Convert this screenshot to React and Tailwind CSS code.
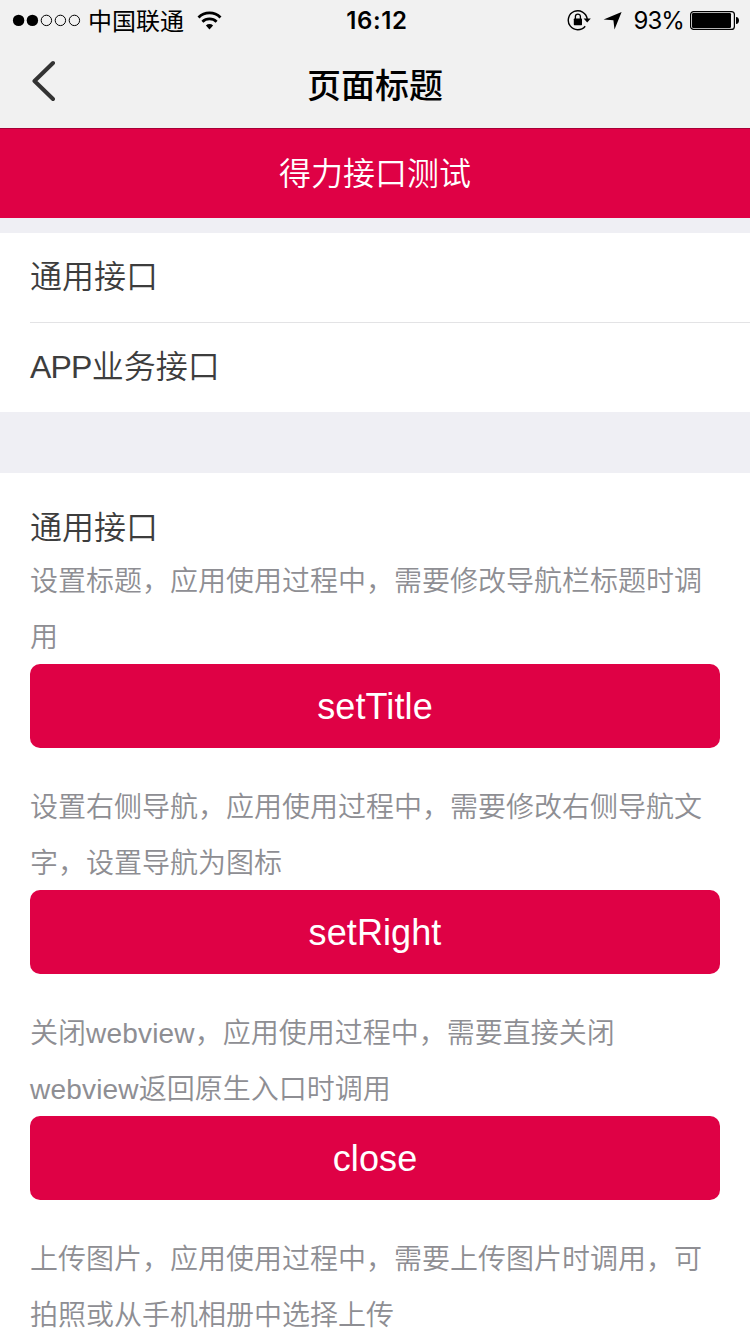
const sections = [
  { lines: [['设置标题，应用使用过程中，需要修改导航栏标题时调'], ['用']], action: 'setTitle' },
  { lines: [['设置右侧导航，应用使用过程中，需要修改右侧导航文'], ['字，设置导航为图标']], action: 'setRight' },
  { lines: [['关闭', 'webview', '，应用使用过程中，需要直接关闭'], ['', 'webview', '返回原生入口时调用']], action: 'close' },
  { lines: [['上传图片，应用使用过程中，需要上传图片时调用，可'], ['拍照或从手机相册中选择上传']], action: null },
];

function StatusBar() {
  return (
    <div className="grid h-10 grid-cols-3 items-center text-black">
      <div className="flex h-10 items-center pl-3">
        <svg width="70" height="14" viewBox="0 0 70 14" className="shrink-0">
          <circle cx="6.6" cy="7.4" r="5.7" />
          <circle cx="20.4" cy="7.4" r="5.7" />
          <g fill="none" stroke="#000" strokeWidth="1">
            <circle cx="34.4" cy="7.4" r="5.2" />
            <circle cx="48.4" cy="7.4" r="5.2" />
            <circle cx="62.4" cy="7.4" r="5.2" />
          </g>
        </svg>
        <span className="ml-[6px] pt-[3px] text-[24px] leading-[37px] whitespace-nowrap">中国联通</span>
        <svg width="25" height="20" viewBox="0 0 25 20" className="mt-px ml-[13px] shrink-0" fill="none" stroke="#000" strokeWidth="2.8">
          <path d="M1.5 6.4a15.6 15.6 0 0 1 22 0" />
          <path d="M5.4 10.8a10.2 10.2 0 0 1 14.2 0" />
          <path d="M8.9 14.5a5.3 5.3 0 0 1 7.2 0L12.5 18.6z" fill="#000" stroke="none" />
        </svg>
      </div>
      <div className="pt-[2px] pl-1 text-center font-['Inter',sans-serif] text-[24px] leading-[38px] font-semibold tracking-[0.6px]">16:12</div>
      <div className="flex h-10 items-center justify-end pr-[10px]">
        <svg width="24" height="22" viewBox="0 0 24 22" className="shrink-0">
          <path d="M18.2 17.2a9.5 9.5 0 1 1 2-7.2" fill="none" stroke="#000" strokeWidth="1.4" />
          <path d="M16.6 9.6h7.2l-3.6 4z" />
          <rect x="6.8" y="9.6" width="8.2" height="6.6" rx="0.6" />
          <path d="M8.4 10V7.6a2.5 2.5 0 0 1 5 0V10" fill="none" stroke="#000" strokeWidth="1.3" />
        </svg>
        <svg width="19" height="19" viewBox="0 0 19 19" className="ml-3 shrink-0">
          <path d="M18.6 1 11.5 18.4 10.4 9.2.6 8.6z" />
        </svg>
        <span className="ml-[11px] pt-[2px] font-['Inter',sans-serif] text-[24px] leading-[38px] tracking-[-0.9px]">93%</span>
        <svg width="50" height="19" viewBox="0 0 50 19" className="mt-px ml-[6px] shrink-0">
          <rect x=".6" y=".6" width="43.8" height="17.8" rx="3" fill="none" stroke="#000" strokeWidth="1.2" />
          <rect x="2" y="2" width="39" height="15" rx="1.2" />
          <path d="M46 6c4 0 4 7 0 7z" />
        </svg>
      </div>
    </div>
  );
}

export default function App() {
  return (
    <div className="h-[1334px] w-[750px] overflow-hidden bg-[#efeff4] font-['Liberation_Sans','Noto_Sans_CJK_SC',sans-serif] text-[#3d3d3d]">
      <header className="h-32 bg-[#f1f1f1]">
        <StatusBar />
        <div className="grid h-[88px] grid-cols-[100px_1fr_100px] items-center">
          <svg width="24" height="42" viewBox="0 0 24 42" className="mb-[6px] ml-8" fill="none" stroke="#333" strokeWidth="4" strokeLinecap="round" strokeLinejoin="round">
            <path d="M21 3 2.5 21 21 39" />
          </svg>
          <h1 className="pt-[4px] text-center text-[34px] leading-[84px] font-medium text-black">页面标题</h1>
        </div>
      </header>
      <div className="h-[90px] border-t border-[#a70036] bg-[#df0145] pt-px text-center text-[32px] leading-[88px] font-[350] text-white">得力接口测试</div>
      <nav className="mt-[15px] h-[179px] bg-white pl-[30px] text-[32px] font-[350]">
        <div className="h-[90px] border-b border-[#e3e3e5] leading-[89px]">通用接口</div>
        <div className="h-[89px] leading-[89px]"><span className="tracking-[-0.8px]">APP</span>业务接口</div>
      </nav>
      <main className="mt-[61px] h-[861px] bg-white px-[30px] pt-[32px]">
        <h2 className="h-[47px] text-[32px] leading-[46px] font-[350]">通用接口</h2>
        {sections.map(({ lines, action }) => (
          <section key={lines[0].join('')} className="mb-[30px]">
            <p className="h-28 pt-[2px] text-[28px] leading-[56px] font-[350] whitespace-nowrap text-[#8e8e93]">
              {lines.map(([lead, latin, rest]) => (
                <span key={lead + rest} className="block">{lead}<span className="tracking-[0.2px]">{latin}</span>{rest}</span>
              ))}
            </p>
            {action && (
              <button className="block h-[84px] w-full rounded-[10px] bg-[#df0145] pt-[2px] text-center text-[36px] leading-[82px] tracking-[0.1px] text-white">{action}</button>
            )}
          </section>
        ))}
      </main>
    </div>
  );
}
